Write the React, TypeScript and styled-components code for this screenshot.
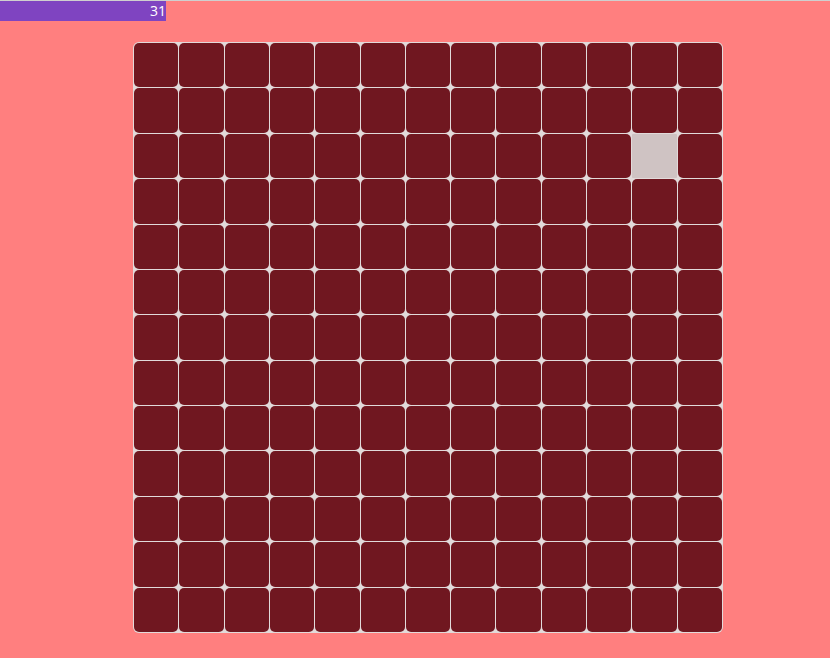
import React from "react";
import styled, { createGlobalStyle } from "styled-components";

const Global = createGlobalStyle`
  html, body { margin: 0; padding: 0; }
  body {
    background: #ff7f7f;
    font-family: "Open Sans", "Noto Sans", sans-serif;
    border-top: 1px solid #cfcfcf;
    height: 657px;
    overflow: hidden;
  }
`;

const Bar = styled.div`
  width: 166px;
  height: 20px;
  background: #7f44c1;
  color: #ffffff;
  font-size: 14px;
  line-height: 20px;
  text-align: right;
  box-sizing: border-box;
  padding-right: 0;
`;

const Board = styled.div`
  margin: 21px 0 0 133px;
  width: 590px;
  height: 591px;
  box-sizing: border-box;
  display: grid;
  grid-template-columns: repeat(13, 1fr);
  grid-template-rows: repeat(13, 1fr);
  gap: 1px;
  padding: 1px;
  background: #e2dada;
  border-radius: 6px;
`;

const Cell = styled.div<{ $lit: boolean }>`
  background: ${(p) => (p.$lit ? "#cfc3c3" : "#701720")};
  border-radius: ${(p) => (p.$lit ? "1px" : "5px")};
`;

export default function App() {
  const cells = Array.from({ length: 169 }, (_, i) => i);
  return (
    <>
      <Global />
      <Bar>31</Bar>
      <Board>
        {cells.map((i) => (
          <Cell key={i} $lit={i === 2 * 13 + 11} />
        ))}
      </Board>
    </>
  );
}
